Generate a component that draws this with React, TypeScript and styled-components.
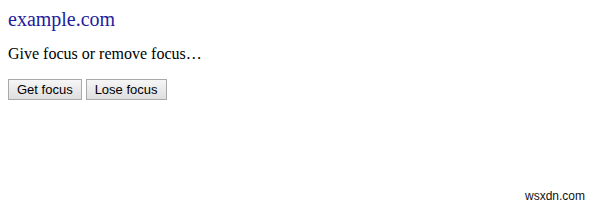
import styled, { createGlobalStyle } from 'styled-components';

const Global = createGlobalStyle`
    html, body {
        margin: 0;
        background: #ffffff;
    }
    body {
        padding: 8px;
        font-family: "Liberation Serif", "Times New Roman", serif;
        color: #000000;
    }
`;

const Page = styled.div`
    position: relative;
    height: 193px;
`;

const SiteLink = styled.a`
    display: block;
    font-size: 20px;
    line-height: 22px;
    color: #231c9c;
    text-decoration: none;
`;

const Lead = styled.p`
    margin: 15px 0 16px;
    font-size: 16px;
    line-height: 18px;
`;

const Buttons = styled.div`
    display: flex;
    gap: 4px;
`;

const Btn = styled.button`
    font-family: "Liberation Sans", Arial, sans-serif;
    font-size: 13px;
    line-height: 15px;
    padding: 2px 8px 2px;
    color: #000;
    border: 1px solid #a9a9a9;
    border-radius: 0;
    background: linear-gradient(#f6f6f6, #dedede);
`;

const Watermark = styled.span`
    position: absolute;
    right: 4px;
    bottom: -2px;
    font-family: "Liberation Sans", Arial, sans-serif;
    font-size: 12px;
    color: #111;
`;

const App = () => {
  return (
    <Page>
        <Global />
        <SiteLink href="#">example.com</SiteLink>
        <Lead>Give focus or remove focus…</Lead>
        <Buttons>
            <Btn>Get focus</Btn>
            <Btn>Lose focus</Btn>
        </Buttons>
        <Watermark>wsxdn.com</Watermark>
    </Page>
  );
}

export default App;
